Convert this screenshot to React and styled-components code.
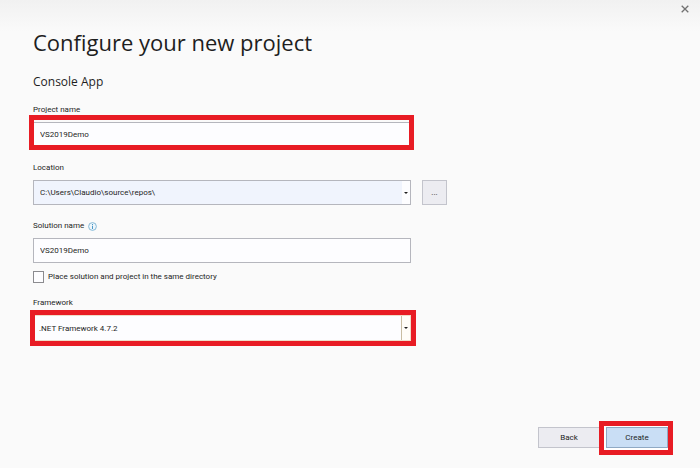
import { useState } from "react";
import styled, { createGlobalStyle } from "styled-components";

export default function App() {
  const [projectName, setProjectName] = useState("VS2019Demo");
  const [location, setLocation] = useState("C:\\Users\\Claudio\\source\\repos\\");
  const [solutionName, setSolutionName] = useState("VS2019Demo");
  const [sameDirectory, setSameDirectory] = useState(false);

  return (
    <>
      <GlobalStyle />
      <Dialog>
        <TitleBar>
          <CloseButton type="button" aria-label="Close">
            <svg width="8" height="8" viewBox="0 0 8 8" aria-hidden="true">
              <path d="M0.7 0.7 7.3 7.3M7.3 0.7 0.7 7.3" stroke="#717171" strokeWidth="1.3" />
            </svg>
          </CloseButton>
        </TitleBar>

        <Content onSubmit={(event) => event.preventDefault()}>
          <Title>Configure your new project</Title>
          <Subtitle>Console App</Subtitle>

          <Field>
            <Label htmlFor="project-name">Project name</Label>
            <Highlight $inset="-7px -3px -3px -4px">
              <TextInput
                id="project-name"
                value={projectName}
                onChange={(event) => setProjectName(event.target.value)}
              />
            </Highlight>
          </Field>

          <Field>
            <Label htmlFor="location">Location</Label>
            <LocationRow>
              <ComboBox>
                <ComboInput
                  id="location"
                  value={location}
                  onChange={(event) => setLocation(event.target.value)}
                />
                <DropButton type="button" aria-label="Recent locations">
                  <Arrow />
                </DropButton>
              </ComboBox>
              <BrowseButton type="button" aria-label="Browse">
                ...
              </BrowseButton>
            </LocationRow>
          </Field>

          <Field>
            <LabelRow>
              <Label htmlFor="solution-name">Solution name</Label>
              <InfoIcon />
            </LabelRow>
            <TextInput
              id="solution-name"
              value={solutionName}
              onChange={(event) => setSolutionName(event.target.value)}
            />
          </Field>

          <CheckRow>
            <Checkbox
              type="checkbox"
              checked={sameDirectory}
              onChange={(event) => setSameDirectory(event.target.checked)}
            />
            Place solution and project in the same directory
          </CheckRow>

          <Field>
            <Label htmlFor="framework">Framework</Label>
            <Highlight $inset="-5px -5px -5px -3px">
              <SelectBox>
                <Select id="framework" defaultValue="4.7.2">
                  <option value="4.7.2">.NET Framework 4.7.2</option>
                </Select>
                <SelectArrow>
                  <Arrow />
                </SelectArrow>
              </SelectBox>
            </Highlight>
          </Field>

          <Footer>
            <Button type="button">Back</Button>
            <Highlight $inset="-6px -5px -7px -7px">
              <Button type="submit" $primary>
                Create
              </Button>
            </Highlight>
          </Footer>
        </Content>
      </Dialog>
    </>
  );
}

function Arrow() {
  return (
    <svg width="4" height="2" viewBox="0 0 4 2" aria-hidden="true">
      <path d="M0 0H4L2 2Z" fill="#1e1e1e" />
    </svg>
  );
}

function InfoIcon() {
  return (
    <svg width="9" height="9" viewBox="0 0 9 9" role="img" aria-label="Info">
      <circle cx="4.5" cy="4.5" r="3.9" fill="#eef6fb" stroke="#79b3d4" strokeWidth="0.9" />
      <path d="M4.5 3.8V7M4.5 2V3.1" stroke="#4a97c6" strokeWidth="1" />
    </svg>
  );
}

const GlobalStyle = createGlobalStyle`
  * {
    box-sizing: border-box;
  }

  body {
    margin: 0;
    background: #fafafa;
    color: #1e1e1e;
    font-family: Roboto, "Open Sans", sans-serif;
    font-size: 8px;
  }

  button,
  input,
  select {
    color: inherit;
    font: inherit;
  }
`;

const Dialog = styled.main`
  display: flex;
  flex-direction: column;
  min-height: 100vh;
  background: linear-gradient(#f1f1f1, #fafafa 32px);
`;

const TitleBar = styled.header`
  display: flex;
  justify-content: flex-end;
  padding: 2px 8px 0;
`;

const CloseButton = styled.button`
  display: flex;
  align-items: center;
  justify-content: center;
  width: 14px;
  height: 14px;
  padding: 0;
  border: none;
  background: none;
`;

const Content = styled.form`
  display: flex;
  flex: 1;
  flex-direction: column;
  padding: 10px 32px 20px 33px;
`;

const Title = styled.h1`
  margin: 0 0 14px;
  font-family: "Open Sans", "Noto Sans", sans-serif;
  font-size: 22px;
  font-weight: 400;
  line-height: 32px;
`;

const Subtitle = styled.h2`
  margin: 0 0 11px;
  font-family: "Open Sans", "Noto Sans", sans-serif;
  font-size: 12px;
  font-weight: 400;
  line-height: 20px;
`;

const Field = styled.div`
  display: flex;
  flex-direction: column;
  gap: 5px;
  width: 100%;
  max-width: 378px;

  & + & {
    margin-top: 14px;
  }
`;

const LabelRow = styled.div`
  display: flex;
  align-items: center;
  gap: 4px;
`;

const Label = styled.label`
  line-height: 14px;
`;

const Highlight = styled.div`
  position: relative;

  &::after {
    content: "";
    position: absolute;
    inset: ${({ $inset }) => $inset};
    border: 5px solid #e81c24;
    pointer-events: none;
  }
`;

const TextInput = styled.input`
  display: block;
  width: 100%;
  height: 25px;
  padding: 0 6px;
  border: 1px solid #b5b6bd;
  border-radius: 0;
  background: #fdfdff;
`;

const LocationRow = styled.div`
  display: flex;
  gap: 11px;
  margin-right: -36px;
`;

const ComboBox = styled.div`
  display: flex;
  flex: 1;
  height: 25px;
  border: 1px solid #b5b6bd;
  background: #f0f4fd;
`;

const ComboInput = styled.input`
  flex: 1;
  min-width: 0;
  padding: 0 6px;
  border: none;
  background: none;
`;

const DropButton = styled.button`
  display: flex;
  align-items: center;
  justify-content: center;
  width: 8px;
  padding: 0;
  border: none;
  background: #fdfdff;
`;

const BrowseButton = styled.button`
  width: 25px;
  height: 25px;
  padding: 0;
  border: 1px solid #c3c4cc;
  background: #ececf1;
`;

const CheckRow = styled.label`
  display: flex;
  align-items: center;
  align-self: flex-start;
  gap: 4px;
  margin: 7px 0 12px;
  line-height: 14px;
`;

const Checkbox = styled.input`
  appearance: none;
  width: 11px;
  height: 12px;
  margin: 0;
  border: 1px solid #8b8b8f;
  background: #fdfdff;

  &:checked {
    background: #1e1e1e;
    box-shadow: inset 0 0 0 2px #fdfdff;
  }
`;

const SelectBox = styled.div`
  display: grid;
  height: 26px;
  border: 1px solid #efdcc8;
  background: #fdfdff;
`;

const Select = styled.select`
  grid-area: 1 / 1;
  appearance: none;
  padding: 0 16px 0 5px;
  border: none;
  background: none;
`;

const SelectArrow = styled.span`
  display: flex;
  grid-area: 1 / 1;
  align-items: center;
  justify-content: center;
  justify-self: end;
  width: 9px;
  border-left: 1px solid #c9bda2;
  background: #fffdf8;
  pointer-events: none;
`;

const Footer = styled.footer`
  display: flex;
  justify-content: flex-end;
  gap: 6px;
  margin-top: auto;
`;

const Button = styled.button`
  display: block;
  width: 62px;
  height: 21px;
  padding: 0;
  border: 1px solid ${({ $primary }) => ($primary ? "#8fa9c4" : "#c3c4cc")};
  background: ${({ $primary }) => ($primary ? "#c9def5" : "#ececf1")};
  box-shadow: ${({ $primary }) => ($primary ? "0 0 0 2px #ffffff" : "none")};
`;
